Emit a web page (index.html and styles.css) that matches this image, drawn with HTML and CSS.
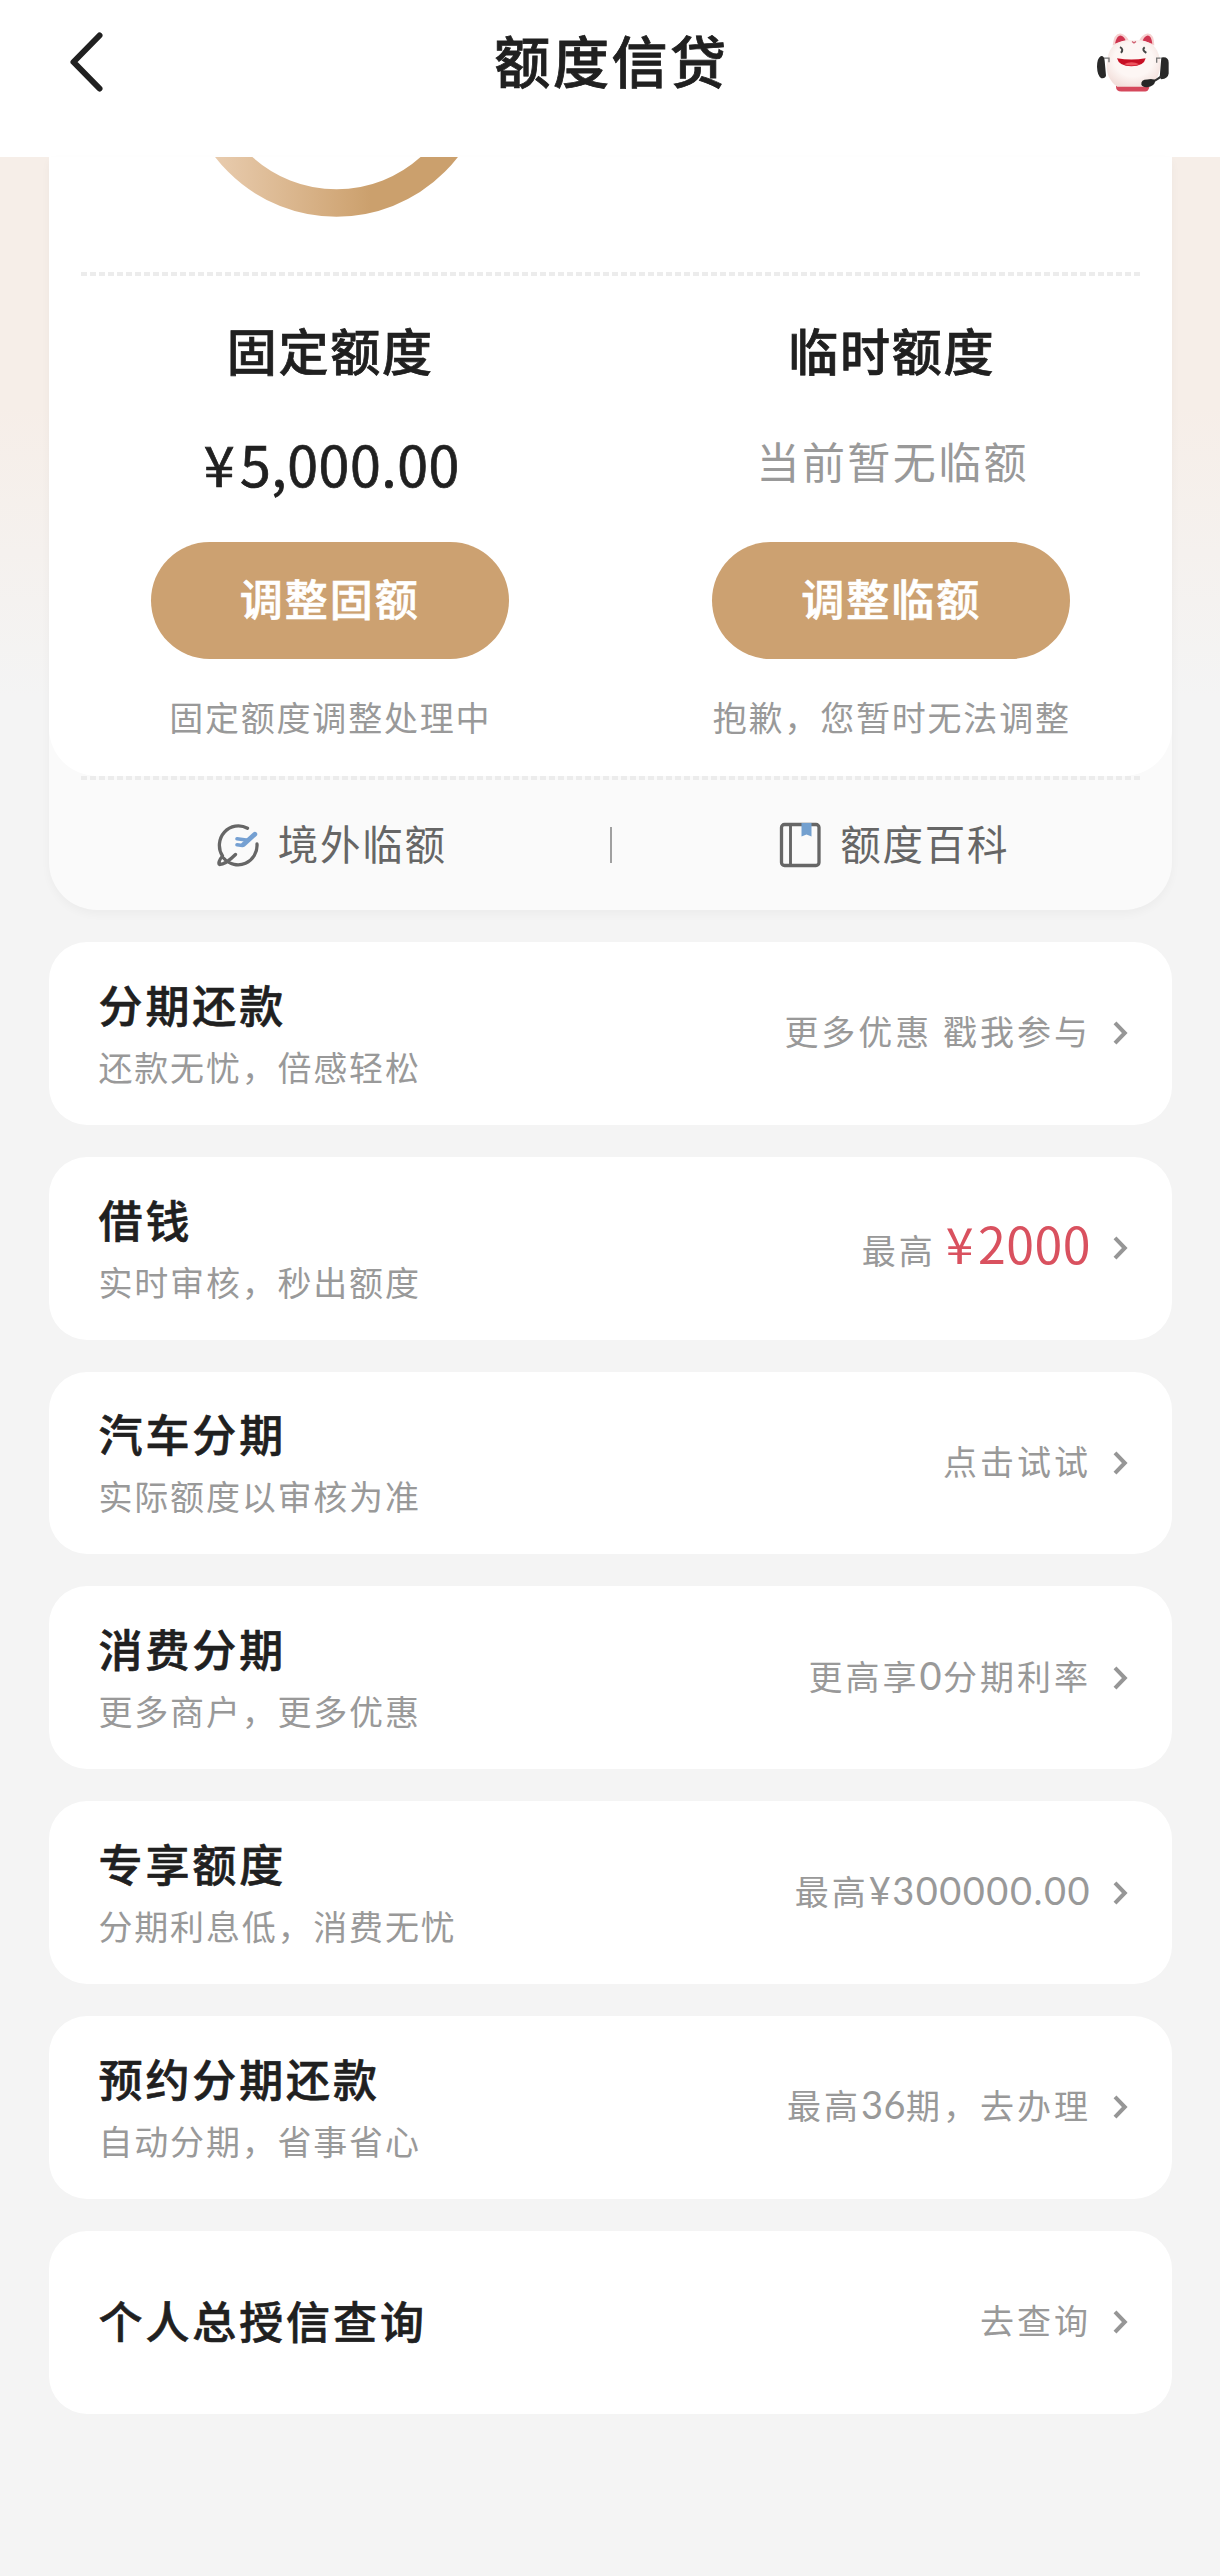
FILE: index.html
```html
<!DOCTYPE html>
<html lang="zh-CN">
<head>
<meta charset="utf-8">
<title>额度信贷</title>
<link rel="stylesheet" href="styles.css">
</head>
<body>
<svg class="defs" width="0" height="0" aria-hidden="true">
  <symbol id="chevron" viewBox="0 0 16 26"><path d="M2 2.800 L11.800 13 L2 23.200" fill="none" stroke="#969696" stroke-width="4"/></symbol>
</svg>
<header class="navbar">
  <svg class="back" viewBox="0 0 36 62" aria-label="返回"><path d="M31.500 4.500 L5.500 31 L31.500 57.500" fill="none" stroke="#202020" stroke-width="6" stroke-linecap="round" stroke-linejoin="round"/></svg>
  <h1 class="navbar-title">额度信贷</h1>
  <svg class="mascot" viewBox="108 64 222 182" aria-label="客服">
    <defs>
      <radialGradient id="face" cx=".5" cy=".42" r=".6"><stop offset=".6" stop-color="#fdf6f4"/><stop offset="1" stop-color="#f3e0dc"/></radialGradient>
    </defs>
    <path d="M158 104 Q162 66 182 68 Q200 72 208 92 Z" fill="#f6d0d0"/>
    <path d="M165 98 Q170 74 182 74 Q194 78 197 90 Z" fill="#cf3550"/>
    <path d="M283 104 Q282 66 262 68 Q244 72 236 92 Z" fill="#f6d0d0"/>
    <path d="M277 99 Q274 74 263 74 Q251 78 248 90 Z" fill="#cf3550"/>
    <path d="M168 216 H268 Q270 242 256 242 H184 Q168 242 168 228 Z" fill="#d5485c"/>
    <path d="M220 88 C270 86 292 104 300 146 C306 184 288 212 268 228 H172 C150 212 134 186 142 146 C148 104 172 86 220 88 Z" fill="url(#face)"/>
    <path d="M216 92 l6 4 6 -4" fill="none" stroke="#d06070" stroke-width="4"/>
    <path d="M180 109 q12 6 3 17 M254 109 q-10 8 5 17" fill="none" stroke="#454545" stroke-width="6"/>
    <path d="M171 142 Q214 150 257 142 Q252 166 214 166 Q177 166 171 142 Z" fill="#c70f24"/>
    <path d="M192 160 Q214 149 238 160 Q214 168 192 160 Z" fill="#ee5560"/>
    <path d="M132 142 h15 v12 M302 142 h-12 v14" fill="none" stroke="#777" stroke-width="4"/>
    <path d="M122 136 Q133 134 134 150 L138 194 Q136 204 124 202 Q112 196 111 168 Q111 142 122 136 Z" fill="#292929"/>
    <path d="M304 140 Q326 136 326 156 V188 Q324 204 304 205 Q298 202 300 188 Z" fill="#292929"/>
    <path d="M304 196 Q288 210 270 214" fill="none" stroke="#333" stroke-width="6"/>
    <path d="M244 222 Q242 206 262 206 Q282 202 286 211 Q282 226 262 229 Q248 230 244 222 Z" fill="#262626"/>
  </svg>
</header>
<main class="page">
  <section class="quota">
    <div class="quota-main">
      <div class="gauge">
        <svg class="ring" viewBox="0 0 310 62">
          <defs><linearGradient id="gold" gradientUnits="userSpaceOnUse" x1="30" y1="0" x2="190" y2="0"><stop offset="0" stop-color="#e9cdb0"/><stop offset=".8" stop-color="#d2a97a"/><stop offset="1" stop-color="#cba06d"/></linearGradient></defs>
          <circle cx="155.500" cy="-93.500" r="139.500" fill="none" stroke="url(#gold)" stroke-width="27.500"/>
        </svg>
      </div>
      <div class="dashes"></div>
      <div class="columns">
        <div class="column">
          <h2 class="column-title">固定额度</h2>
          <div class="amount"><span class="yen">¥</span>5,000.00</div>
          <button class="pill">调整固额</button>
          <p class="note">固定额度调整处理中</p>
        </div>
        <div class="column">
          <h2 class="column-title">临时额度</h2>
          <div class="amount amount-empty">当前暂无临额</div>
          <button class="pill">调整临额</button>
          <p class="note">抱歉，您暂时无法调整</p>
        </div>
      </div>
    </div>
    <div class="dashes"></div>
    <div class="links">
      <a class="link">
        <svg class="link-icon" viewBox="0 0 44 46">
          <path d="M31.500 6.200 A19 19.500 0 0 0 6.500 34 C3 38 2.200 42 3.500 42.500 C8 42.500 14 38 19.500 32.500 M8 36.500 A19 19.500 0 0 0 41 22" fill="none" stroke="#666" stroke-width="3.300" stroke-linecap="round" stroke-linejoin="round"/>
          <path d="M38.800 12.200 L27.500 22.500" stroke="#75a0d2" stroke-width="4.800" stroke-linecap="round"/>
          <path d="M21 16.800 L32 18.200 M21 22.800 L26.500 23.500" stroke="#75a0d2" stroke-width="3.600" stroke-linecap="round"/>
        </svg>
        <span>境外临额</span>
      </a>
      <span class="links-divider"></span>
      <a class="link">
        <svg class="link-icon" viewBox="0 0 44 46">
          <rect x="3.500" y="2.500" width="37.500" height="41" rx="3" fill="none" stroke="#666" stroke-width="3.300"/>
          <path d="M12.500 2.500 V43.500" stroke="#666" stroke-width="2.900"/>
          <path d="M23.500 1 H33.500 V14.500 L28.500 12.500 L23.500 14.500 Z" fill="#73a0cf"/>
        </svg>
        <span>额度百科</span>
      </a>
    </div>
  </section>

  <section class="list">
    <a class="item">
      <div class="item-text"><h3>分期还款</h3><p>还款无忧，倍感轻松</p></div>
      <div class="item-value">更多优惠 戳我参与</div><svg class="chevron"><use href="#chevron"/></svg>
    </a>
    <a class="item">
      <div class="item-text"><h3>借钱</h3><p>实时审核，秒出额度</p></div>
      <div class="item-value">最高<strong class="price"><span class="yen">¥</span>2000</strong></div><svg class="chevron"><use href="#chevron"/></svg>
    </a>
    <a class="item">
      <div class="item-text"><h3>汽车分期</h3><p>实际额度以审核为准</p></div>
      <div class="item-value">点击试试</div><svg class="chevron"><use href="#chevron"/></svg>
    </a>
    <a class="item">
      <div class="item-text"><h3>消费分期</h3><p>更多商户，更多优惠</p></div>
      <div class="item-value">更高享<span class="num">0</span>分期利率</div><svg class="chevron"><use href="#chevron"/></svg>
    </a>
    <a class="item">
      <div class="item-text"><h3>专享额度</h3><p>分期利息低，消费无忧</p></div>
      <div class="item-value">最高<span class="num">¥300000.00</span></div><svg class="chevron"><use href="#chevron"/></svg>
    </a>
    <a class="item">
      <div class="item-text"><h3>预约分期还款</h3><p>自动分期，省事省心</p></div>
      <div class="item-value">最高<span class="num num-tight">36</span>期，去办理</div><svg class="chevron"><use href="#chevron"/></svg>
    </a>
    <a class="item">
      <div class="item-text"><h3>个人总授信查询</h3></div>
      <div class="item-value">去查询</div><svg class="chevron"><use href="#chevron"/></svg>
    </a>
  </section>
</main>
</body>
</html>
```
FILE: styles.css
```css
* { box-sizing: border-box; }
body, h1, h2, h3, p { margin: 0; }
body {
  min-height: 2576px;
  background: #f4f4f4;
  color: #202020;
  font-family: "Noto Sans CJK SC", sans-serif;
}
.defs { display: block; }

.navbar {
  display: grid;
  grid-template-columns: 74px 1fr 74px;
  align-items: center;
  height: 157px;
  padding: 0 50px 33px 68px;
  background: #fff;
}
.back { width: 36px; height: 62px; }
.navbar-title {
  margin-left: -15px;
  padding-bottom: 6px;
  text-align: center;
  font-size: 56px;
  font-weight: 500;
  line-height: 80px;
  letter-spacing: 2.600px;
  -webkit-text-stroke: .8px;
}
.mascot { width: 74px; height: 61px; }

.page {
  padding: 0 48px 0 49px;
  background: linear-gradient(#f6eee8 0, #f6eee8 250px, #f4f4f4 540px);
}

.quota {
  border-radius: 0 0 48px 48px;
  background: #fafafa;
  box-shadow: 0 4px 10px rgba(0, 0, 0, .035);
}
.quota-main {
  height: 619px;
  border-radius: 0 0 48px 48px;
  background: #fff;
}
.gauge { height: 115px; padding-left: 132px; }
.ring { display: block; width: 310px; height: 62px; }
.dashes {
  height: 4px;
  margin: 0 32px;
  background: repeating-linear-gradient(90deg, #ececec 0 6px, transparent 6px 9px);
}
.columns { display: grid; grid-template-columns: 1fr 1fr; }
.column {
  display: flex;
  flex-direction: column;
  align-items: center;
  padding: 38px 0 0 1px;
}
.column-title {
  font-size: 50px;
  font-weight: 500;
  line-height: 70px;
  letter-spacing: 1.800px;
  -webkit-text-stroke: .7px;
}
.amount {
  height: 80px;
  margin-top: 38px;
  padding-left: 3px;
  font-size: 55.500px;
  line-height: 82px;
  letter-spacing: .5px;
  -webkit-text-stroke: .7px;
}
.yen { margin-right: 5px; }
.amount-empty {
  padding-left: 2px;
  line-height: 76px;
  font-size: 43px;
  letter-spacing: 2.400px;
  -webkit-text-stroke: 0;
  color: #999;
}
.pill {
  width: 358px;
  height: 117px;
  margin: 40px 1px 0 0;
  padding: 0 0 7px;
  border: 0;
  border-radius: 59px;
  background: #cca171;
  color: #fff;
  font: 500 43px "Noto Sans CJK SC", sans-serif;
  letter-spacing: 2px;
  -webkit-text-stroke: .7px;
}
.note {
  margin-top: 33px;
  font-size: 34px;
  line-height: 50px;
  letter-spacing: 1.800px;
  color: #999;
}

.links {
  display: grid;
  grid-template-columns: 1fr 2px 1fr;
  align-items: center;
  height: 130px;
}
.link {
  display: flex;
  align-items: center;
  justify-content: center;
  gap: 18px;
  padding: 0 0 1px 4px;
  font-size: 40.500px;
  font-weight: 400;
  line-height: 60px;
  letter-spacing: 1.700px;
  color: #666;
}
.link span { padding-bottom: 4px; }
.link-icon { width: 44px; height: 46px; }
.links-divider { height: 36px; background: #a0a0a0; }

.list {
  display: grid;
  gap: 32px;
  padding-top: 32px;
}
.item {
  display: flex;
  align-items: center;
  height: 182.800px;
  padding: 0 43px 0 49.500px;
  border-radius: 38px;
  background: #fff;
}
.item-text { flex: 1; padding-bottom: 4px; }
.item h3 {
  font-size: 44px;
  font-weight: 500;
  line-height: 66px;
  letter-spacing: 2.900px;
  -webkit-text-stroke: .6px;
}
.item p {
  font-size: 34px;
  line-height: 50px;
  letter-spacing: 1.800px;
  margin-top: 5px;
  color: #999;
}
.item-value {
  padding-bottom: 4px;
  font-size: 34px;
  line-height: 50px;
  letter-spacing: 3px;
  color: #999;
}
.num {
  font-family: Lato, sans-serif;
  font-size: 38px;
  line-height: 1;
  letter-spacing: 1.500px;
}
.num-tight { letter-spacing: .5px; }
.price {
  margin-left: 10px;
  font-size: 50px;
  font-weight: 400;
  line-height: 1;
  letter-spacing: .5px;
  color: #d9515f;
}
.price .yen { margin-right: 4px; }
.chevron { width: 16px; height: 26px; margin-left: 22px; }
```
